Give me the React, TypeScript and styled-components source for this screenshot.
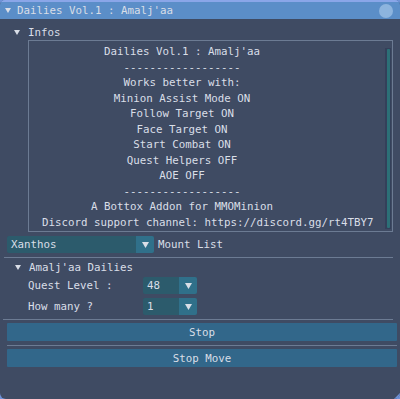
import React from "react";
import styled, { createGlobalStyle } from "styled-components";

const Global = createGlobalStyle`
  html, body { margin: 0; padding: 0; background: #6f92d8; }
  body { width: 400px; height: 399px; overflow: hidden; }
  * { box-sizing: border-box; }
`;

const Window = styled.div`
  position: relative;
  width: 400px;
  height: 399px;
  background: #3f4b63;
  border-radius: 5px 5px 6px 6px;
  overflow: hidden;
  font-family: "DejaVu Sans Mono", "Liberation Mono", monospace;
  font-size: 10.8px;
  color: #d9dee7;
  display: flex;
  flex-direction: column;
`;

const TitleBar = styled.div`
  height: 19px;
  background: #5b8ec8;
  border-top: 2px solid #8aa6e8;
  display: flex;
  align-items: center;
  padding-left: 5px;
  gap: 6px;
  position: relative;
`;

const CloseCircle = styled.div`
  position: absolute;
  right: 7px;
  top: 2px;
  width: 14px;
  height: 14px;
  border-radius: 50%;
  background: #8db4de;
`;

const Body = styled.div`
  display: flex;
  flex-direction: column;
  padding: 5px 3px 0 7px;
`;

const Header = styled.div<{ $indent?: number }>`
  height: 16px;
  display: flex;
  align-items: center;
  padding-left: ${(p) => p.$indent ?? 7}px;
  gap: 8px;
`;

const Tri = ({ size = 6 }: { size?: number }) => (
  <svg width={size} height={size - 1} viewBox="0 0 6 5">
    <polygon points="0,0 6,0 3,5" fill="#d9dee7" />
  </svg>
);

const Child = styled.div`
  margin-left: 21px;
  margin-right: 4px;
  height: 192px;
  border: 1px solid #6c7b93;
  display: flex;
  padding: 3px 0 0 13px;
  position: relative;
`;

const ChildText = styled.div`
  width: 280px;
  display: flex;
  flex-direction: column;
  align-items: safe center;
  line-height: 15.5px;
  white-space: pre;
`;

const ScrollTrack = styled.div`
  position: absolute;
  right: 1px;
  top: 7px;
  bottom: 2px;
  width: 6px;
  background: #34405a;
  display: flex;
  justify-content: center;
  padding: 1px 0;
`;

const ScrollThumb = styled.div`
  width: 3px;
  height: 100%;
  background: #2c7077;
  border-radius: 1px;
`;

const Row = styled.div<{ $mt?: number }>`
  display: flex;
  align-items: center;
  height: 17px;
  gap: 4px;
  margin-top: ${(p) => p.$mt ?? 0}px;
`;

const ComboFrame = styled.div<{ $w: number }>`
  width: ${(p) => p.$w}px;
  height: 17px;
  display: flex;
  background: #2c5b6c;
  border-radius: 2px;
  overflow: hidden;
`;

const ComboValue = styled.div`
  flex: 1;
  display: flex;
  align-items: center;
  padding-left: 4px;
`;

const ComboArrow = styled.div`
  width: 18px;
  display: flex;
  align-items: center;
  justify-content: center;
  background: #30708a;
`;

const Separator = styled.div<{ $m?: string }>`
  height: 1px;
  background: #6c7b93;
  margin: ${(p) => p.$m ?? "4px 0"};
`;

const Label = styled.div`
  width: 132px;
  padding-left: 21px;
`;

const Button = styled.div`
  height: 18px;
  background: #32678a;
  display: flex;
  align-items: center;
  justify-content: center;
  border-radius: 1px;
`;

const Grip = styled.div`
  position: absolute;
  right: 0;
  bottom: 0;
  width: 0;
  height: 0;
  border-left: 6px solid transparent;
  border-bottom: 6px solid #6f92d8;
`;

const Combo = ({ value, w }: { value: string; w: number }) => (
  <ComboFrame $w={w}>
    <ComboValue>{value}</ComboValue>
    <ComboArrow>
      <Tri size={7} />
    </ComboArrow>
  </ComboFrame>
);

const lines = [
  "Dailies Vol.1 : Amalj'aa",
  "------------------",
  "Works better with:",
  "Minion Assist Mode ON",
  "Follow Target ON",
  "Face Target ON",
  "Start Combat ON",
  "Quest Helpers OFF",
  "AOE OFF",
  "------------------",
  "A Bottox Addon for MMOMinion",
  "Discord support channel: https://discord.gg/rt4TBY7",
];

export default function App() {
  return (
    <>
      <Global />
      <Window>
        <TitleBar>
          <Tri />
          <span>Dailies Vol.1 : Amalj'aa</span>
          <CloseCircle />
        </TitleBar>
        <Body>
          <Header>
            <Tri />
            <span>Infos</span>
          </Header>
          <Child>
            <ChildText>
              {lines.map((l, i) => (
                <div key={i}>{l}</div>
              ))}
            </ChildText>
            <ScrollTrack>
              <ScrollThumb />
            </ScrollTrack>
          </Child>
          <Row $mt={4}>
            <Combo value="Xanthos" w={147} />
            <span>Mount List</span>
          </Row>
          <Separator $m="4px 4px 1px -3px" />
          <Header $indent={8}>
            <Tri />
            <span>Amalj'aa Dailies</span>
          </Header>
          <Row $mt={2}>
            <Label>Quest Level :</Label>
            <Combo value="48" w={54} />
          </Row>
          <Row $mt={4}>
            <Label>How many ?</Label>
            <Combo value="1" w={54} />
          </Row>
          <Separator $m="4px 4px 3px -4px" />
          <Button>Stop</Button>
          <Separator $m="4px 0 3px 0" />
          <Button>Stop Move</Button>
        </Body>
        <Grip />
      </Window>
    </>
  );
}
